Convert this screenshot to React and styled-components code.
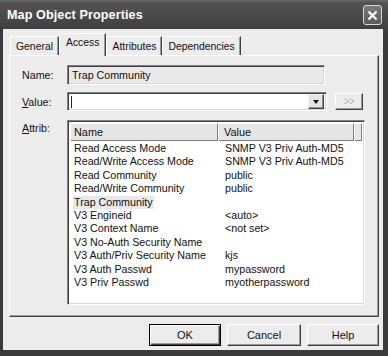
import styled, { createGlobalStyle } from "styled-components";

const GlobalStyle = createGlobalStyle`
  html, body {
    margin: 0;
    padding: 0;
    background: #3a3a3a;
  }
  body {
    font-family: "Liberation Sans", Arial, sans-serif;
  }
`;

const attribs = [
  { name: "Read Access Mode", value: "SNMP V3 Priv Auth-MD5" },
  { name: "Read/Write Access Mode", value: "SNMP V3 Priv Auth-MD5" },
  { name: "Read Community", value: "public" },
  { name: "Read/Write Community", value: "public" },
  { name: "Trap Community", value: "", selected: true },
  { name: "V3 Engineid", value: "<auto>" },
  { name: "V3 Context Name", value: "<not set>" },
  { name: "V3 No-Auth Security Name", value: "" },
  { name: "V3 Auth/Priv Security Name", value: "kjs" },
  { name: "V3 Auth Passwd", value: "mypassword" },
  { name: "V3 Priv Passwd", value: "myotherpassword" },
];

const tabs = ["General", "Access", "Attributes", "Dependencies"];

const App = () => {
  return (
    <>
      <GlobalStyle />
      <Window>
        <TitleBar>
          <Title>Map Object Properties</Title>
          <CloseButton>
            <svg width="11" height="11" viewBox="0 0 11 11">
              <path d="M1.5 1.5 L9.5 9.5 M9.5 1.5 L1.5 9.5" stroke="#fff" strokeWidth="2.2" />
            </svg>
          </CloseButton>
        </TitleBar>
        <Frame>
          <Dialog>
            <TabRow>
              {tabs.map((t) => (
                <Tab key={t} $active={t === "Access"}>{t}</Tab>
              ))}
            </TabRow>
            <Panel>
              <FieldRow>
                <Label>Name:</Label>
                <NameField>Trap Community</NameField>
              </FieldRow>
              <FieldRow $gap={7}>
                <Label><u>V</u>alue:</Label>
                <Combo>
                  <Caret />
                  <ArrowButton>
                    <Triangle />
                  </ArrowButton>
                </Combo>
                <MoreButton>&gt;&gt;</MoreButton>
              </FieldRow>
              <FieldRow $gap={9} $top>
                <Label $top><u>A</u>ttrib:</Label>
                <List>
                  <Header>
                    <HeaderCell $pad={4}>Name</HeaderCell>
                    <HeaderCell $pad={6}>Value</HeaderCell>
                    <HeaderCell />
                  </Header>
                  <Rows>
                    {attribs.map((a) => (
                      <Row key={a.name}>
                        <NameCell>
                          <NameText $selected={a.selected}>{a.name}</NameText>
                        </NameCell>
                        <ValueCell>{a.value}</ValueCell>
                      </Row>
                    ))}
                  </Rows>
                </List>
              </FieldRow>
            </Panel>
            <Footer>
              <Button $default>OK</Button>
              <Button $wide>Cancel</Button>
              <Button>Help</Button>
            </Footer>
          </Dialog>
        </Frame>
      </Window>
    </>
  );
};

const Window = styled.div`
  width: 388px;
  height: 356px;
  display: flex;
  flex-direction: column;
  background: #3b3b3b;
`;

const TitleBar = styled.div`
  height: 29px;
  flex: none;
  display: flex;
  align-items: center;
  justify-content: space-between;
  padding: 0 6px 0 7px;
  box-sizing: border-box;
  background: linear-gradient(#6a6a6a 0, #525252 3px, #4b4b4b 50%, #3f3f3f 100%);
`;

const Title = styled.span`
  color: #fff;
  font-weight: bold;
  font-size: 12.6px;
  letter-spacing: 0.1px;
  padding-top: 1px;
`;

const CloseButton = styled.div`
  width: 19px;
  height: 20px;
  box-sizing: border-box;
  border: 1px solid #d8d8d8;
  border-radius: 3px;
  background: linear-gradient(#7a7a7a, #5a5a5a);
  display: flex;
  align-items: center;
  justify-content: center;
  margin-top: 1px;
`;

const Frame = styled.div`
  flex: 1;
  display: flex;
  padding: 0 5px 6px 3px;
`;

const Dialog = styled.div`
  flex: 1;
  display: flex;
  flex-direction: column;
  background: #ececec;
  padding: 4px 4px 4px 6px;
`;

const TabRow = styled.div`
  display: flex;
  align-items: flex-end;
  height: 22px;
  padding-left: 1px;
  position: relative;
  z-index: 1;
`;

const Tab = styled.div`
  height: ${(p) => (p.$active ? 23 : 19)}px;
  margin-bottom: ${(p) => (p.$active ? -1 : 0)}px;
  box-sizing: border-box;
  padding: ${(p) => (p.$active ? "3px 6px 0" : "4px 5px 0")};
  font-size: 10.4px;
  color: #111;
  background: #ececec;
  border-top: 1px solid #fff;
  border-left: 1px solid #fff;
  border-right: 1px solid #404040;
  box-shadow: inset -1px 0 #9a9a9a;
`;

const Panel = styled.div`
  height: 262px;
  box-sizing: border-box;
  border: 1px solid;
  border-color: #fff #404040 #404040 #fff;
  box-shadow: inset -1px -1px #9a9a9a;
  padding: 9px 13px 11px 12px;
  display: flex;
  flex-direction: column;
`;

const FieldRow = styled.div`
  display: flex;
  align-items: ${(p) => (p.$top ? "flex-start" : "center")};
  margin-top: ${(p) => p.$gap || 0}px;
`;

const Label = styled.div`
  width: 45px;
  flex: none;
  font-size: 10.7px;
  color: #111;
  margin-top: ${(p) => (p.$top ? 2 : 0)}px;
`;

const sunken = `
  box-sizing: border-box;
  border: 1px solid;
  border-color: #808080 #fff #fff #808080;
  box-shadow: inset 1px 1px #404040, inset -1px -1px #d8d8d8;
`;

const NameField = styled.div`
  ${sunken}
  width: 258px;
  height: 20px;
  background: #e9e9e9;
  font-size: 10.7px;
  color: #111;
  padding: 3px 0 0 4px;
`;

const Combo = styled.div`
  ${sunken}
  width: 260px;
  height: 19px;
  background: #fff;
  display: flex;
  align-items: center;
  justify-content: space-between;
  padding: 2px;
`;

const Caret = styled.span`
  width: 1px;
  height: 12px;
  background: #222;
  margin-left: 1px;
`;

const ArrowButton = styled.div`
  width: 16px;
  height: 15px;
  box-sizing: border-box;
  background: #e4e4e4;
  border: 1px solid;
  border-color: #f4f4f4 #404040 #404040 #f4f4f4;
  box-shadow: inset -1px -1px #909090;
  display: flex;
  align-items: center;
  justify-content: center;
`;

const Triangle = styled.span`
  width: 0;
  height: 0;
  border-left: 3.5px solid transparent;
  border-right: 3.5px solid transparent;
  border-top: 4px solid #111;
  margin-top: 1px;
`;

const MoreButton = styled.div`
  width: 28px;
  height: 17px;
  margin-left: 8px;
  box-sizing: border-box;
  border: 1px solid;
  border-color: #fff #404040 #404040 #fff;
  box-shadow: inset -1px -1px #9a9a9a;
  color: #b0b0b0;
  text-shadow: 1px 1px #fff;
  font-size: 10px;
  display: flex;
  align-items: center;
  justify-content: center;
  letter-spacing: -0.5px;
`;

const List = styled.div`
  ${sunken}
  width: 298px;
  height: 185px;
  background: #fff;
  padding: 2px;
  display: flex;
  flex-direction: column;
`;

const Header = styled.div`
  display: grid;
  grid-template-columns: 148px 136px 1fr;
  height: 18px;
  flex: none;
`;

const HeaderCell = styled.div`
  background: #e6e6e6;
  box-shadow: inset 1px 1px #fff, inset -1px -1px #808080;
  font-size: 10.9px;
  color: #111;
  padding: 3px 0 0 ${(p) => p.$pad || 0}px;
`;

const Rows = styled.div`
  padding-top: 1px;
`;

const Row = styled.div`
  display: grid;
  grid-template-columns: 148px 1fr;
  height: 13.4px;
  font-size: 10.7px;
  line-height: 13.4px;
  color: #111;
  white-space: nowrap;
`;

const NameCell = styled.div`
  padding-left: 3px;
`;

const NameText = styled.span`
  padding: 0 1px;
  display: inline-block;
  background: ${(p) => (p.$selected ? "#e8e8e8" : "transparent")};
`;

const ValueCell = styled.div`
  padding-left: 7px;
`;

const Footer = styled.div`
  display: flex;
  justify-content: flex-end;
  gap: 6px;
  margin-top: 7px;
`;

const Button = styled.div`
  width: ${(p) => (p.$wide ? 74 : 72)}px;
  height: 22px;
  box-sizing: border-box;
  background: #ececec;
  font-size: 11px;
  color: #111;
  display: flex;
  align-items: center;
  justify-content: center;
  border: 1px solid;
  border-color: ${(p) => (p.$default ? "#000" : "#fff #404040 #404040 #fff")};
  box-shadow: ${(p) =>
    p.$default
      ? "inset 1px 1px #fff, inset -1px -1px #404040, inset -2px -2px #9a9a9a"
      : "inset -1px -1px #9a9a9a"};
`;

export default App;
